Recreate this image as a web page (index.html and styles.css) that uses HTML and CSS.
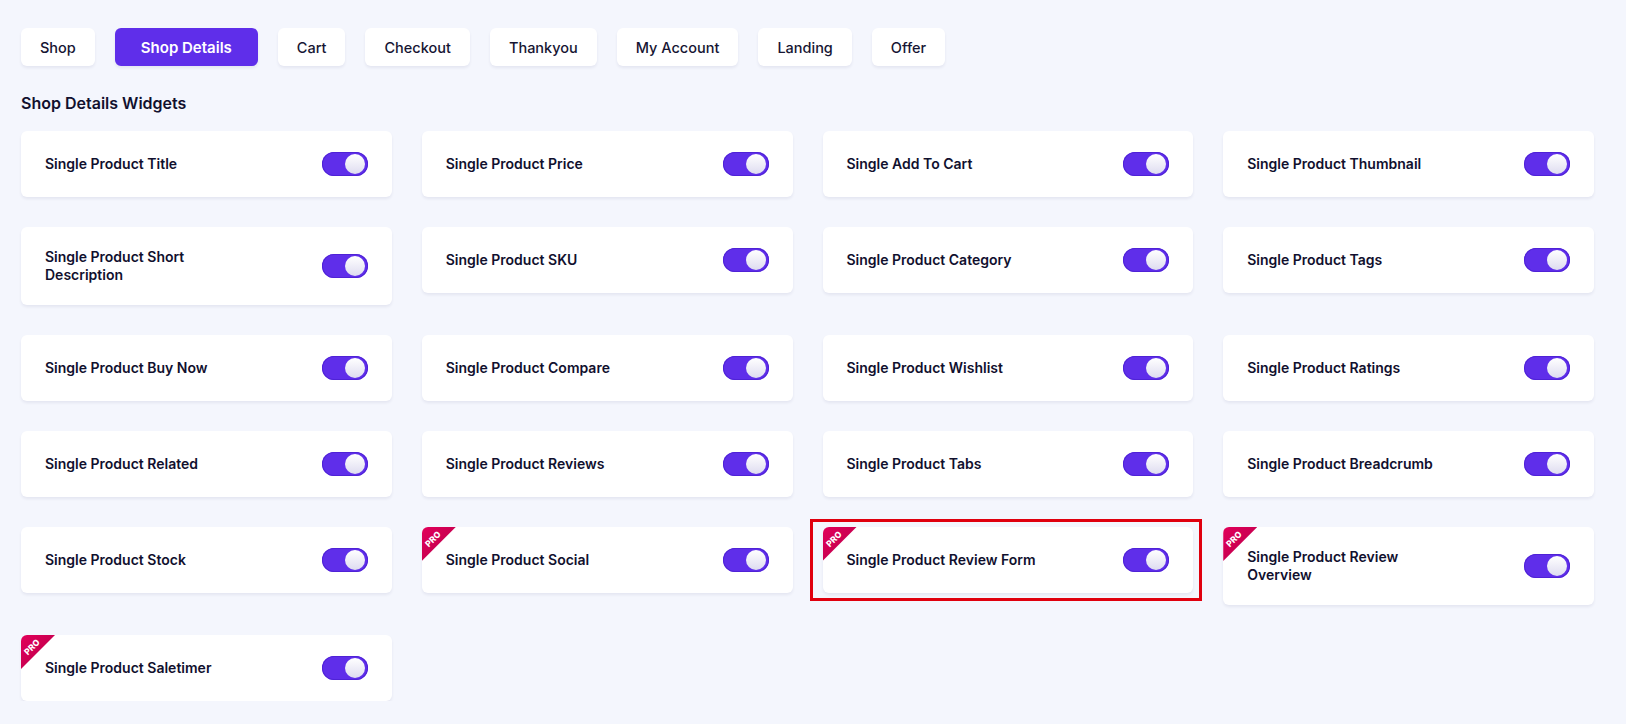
FILE: index.html
```html
<!DOCTYPE html>
<html lang="en">
<head>
<meta charset="utf-8">
<title>Shop Details Widgets</title>
<link rel="stylesheet" href="styles.css">
</head>
<body>
<main class="page">
  <nav class="tabs">
    <button class="tab">Shop</button>
    <button class="tab tab--active">Shop Details</button>
    <button class="tab">Cart</button>
    <button class="tab">Checkout</button>
    <button class="tab">Thankyou</button>
    <button class="tab">My Account</button>
    <button class="tab">Landing</button>
    <button class="tab">Offer</button>
  </nav>

  <h2 class="section-title">Shop Details Widgets</h2>

  <section class="grid">
    <div class="card"><span class="card__label">Single Product Title</span><span class="toggle"></span></div>
    <div class="card"><span class="card__label">Single Product Price</span><span class="toggle"></span></div>
    <div class="card"><span class="card__label">Single Add To Cart</span><span class="toggle"></span></div>
    <div class="card"><span class="card__label">Single Product Thumbnail</span><span class="toggle"></span></div>

    <div class="card"><span class="card__label">Single Product Short Description</span><span class="toggle"></span></div>
    <div class="card"><span class="card__label">Single Product SKU</span><span class="toggle"></span></div>
    <div class="card"><span class="card__label">Single Product Category</span><span class="toggle"></span></div>
    <div class="card"><span class="card__label">Single Product Tags</span><span class="toggle"></span></div>

    <div class="card"><span class="card__label">Single Product Buy Now</span><span class="toggle"></span></div>
    <div class="card"><span class="card__label">Single Product Compare</span><span class="toggle"></span></div>
    <div class="card"><span class="card__label">Single Product Wishlist</span><span class="toggle"></span></div>
    <div class="card"><span class="card__label">Single Product Ratings</span><span class="toggle"></span></div>

    <div class="card"><span class="card__label">Single Product Related</span><span class="toggle"></span></div>
    <div class="card"><span class="card__label">Single Product Reviews</span><span class="toggle"></span></div>
    <div class="card"><span class="card__label">Single Product Tabs</span><span class="toggle"></span></div>
    <div class="card"><span class="card__label">Single Product Breadcrumb</span><span class="toggle"></span></div>

    <div class="card"><span class="card__label">Single Product Stock</span><span class="toggle"></span></div>
    <div class="card"><span class="pro"><span class="pro__text">PRO</span></span><span class="card__label">Single Product Social</span><span class="toggle"></span></div>
    <div class="card card--highlight"><span class="pro"><span class="pro__text">PRO</span></span><span class="card__label">Single Product Review Form</span><span class="toggle"></span></div>
    <div class="card"><span class="pro"><span class="pro__text">PRO</span></span><span class="card__label">Single Product Review Overview</span><span class="toggle"></span></div>

    <div class="card"><span class="pro"><span class="pro__text">PRO</span></span><span class="card__label">Single Product Saletimer</span><span class="toggle"></span></div>
  </section>
</main>
</body>
</html>
```

FILE: styles.css
```css
* { box-sizing: border-box; }

html, body {
  margin: 0;
  padding: 0;
  background: #f4f6fd;
  font-family: Inter, "Noto Sans", "Liberation Sans", sans-serif;
  color: #11102e;
}

.page {
  padding: 28px 32px 0 21px;
}

.tabs {
  display: flex;
  gap: 20px;
}

.tab {
  height: 38px;
  padding: 0 19px;
  border: 0;
  border-radius: 6px;
  background: #ffffff;
  box-shadow: 0 2px 3px rgba(30, 30, 80, 0.07);
  font-family: inherit;
  font-size: 14.5px;
  font-weight: 500;
  color: #161533;
  cursor: pointer;
}

.tab--active {
  background: #5f2eea;
  color: #ffffff;
  font-size: 15px;
  font-weight: 600;
  padding: 0 26px;
}

.section-title {
  margin: 27px 0 18px;
  font-size: 16px;
  line-height: 20px;
  font-weight: 600;
  color: #11102e;
}

.grid {
  display: grid;
  grid-template-columns: repeat(4, 1fr);
  align-items: start;
  gap: 30px;
}

.card {
  position: relative;
  display: flex;
  align-items: center;
  justify-content: space-between;
  padding: 21px 24px;
  background: #ffffff;
  border-radius: 6px;
  box-shadow: 0 2px 3px rgba(30, 30, 80, 0.07);
}

.card--highlight::after {
  content: "";
  position: absolute;
  top: -8px;
  left: -13px;
  right: -9px;
  bottom: -8px;
  border: 3px solid #e0000e;
  pointer-events: none;
}

.card__label {
  max-width: 200px;
  font-size: 14px;
  line-height: 18px;
  font-weight: 600;
  color: #11102e;
}

.toggle {
  position: relative;
  flex: none;
  width: 46px;
  height: 24px;
  border-radius: 12px;
  background: #5f2eea;
  box-shadow: inset 0 0 0 1px #4f22d6;
}

.toggle::after {
  content: "";
  position: absolute;
  top: 2px;
  right: 3px;
  width: 20px;
  height: 20px;
  border-radius: 50%;
  background: linear-gradient(180deg, #ffffff 0%, #dedcf0 100%);
}

.pro {
  position: absolute;
  top: 0;
  left: 0;
  width: 34px;
  height: 34px;
  border-top-left-radius: 6px;
  background: linear-gradient(135deg, #e2005a 0%, #b50048 100%);
  clip-path: polygon(0 0, 100% 0, 0 100%);
}

.pro__text {
  position: absolute;
  left: -2px;
  top: 7px;
  width: 26px;
  height: 10px;
  color: #ffffff;
  font-size: 8.5px;
  font-weight: 800;
  line-height: 10px;
  text-align: center;
  letter-spacing: 0.2px;
  transform: rotate(-45deg);
}
```
